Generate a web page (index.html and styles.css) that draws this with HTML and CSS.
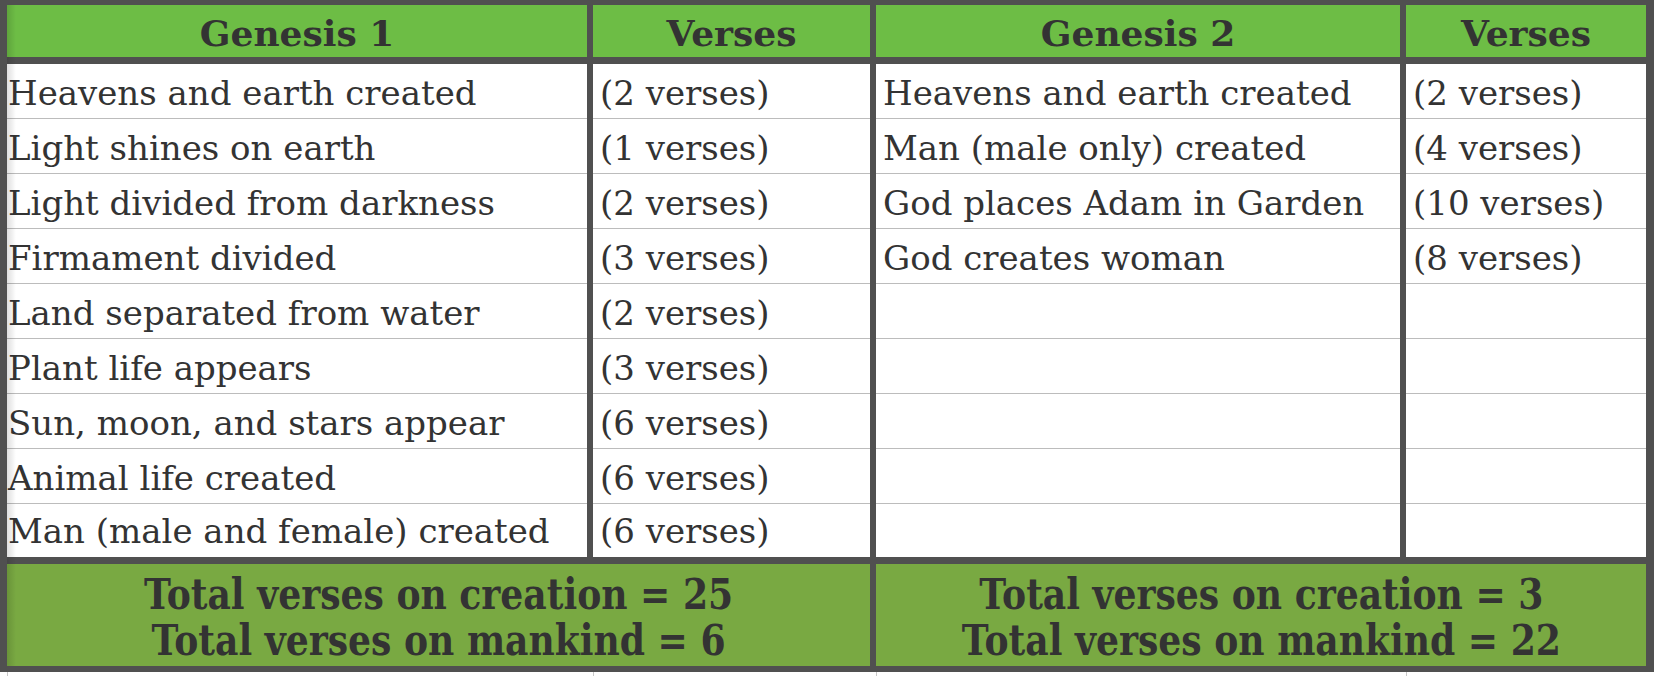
FILE: index.html
```html
<!DOCTYPE html>
<html>
<head>
<meta charset="utf-8">
<link rel="stylesheet" href="styles.css">
</head>
<body>
<div class="sheet">
  <div class="head grid4">
    <div class="hcell">Genesis 1</div>
    <div class="hcell">Verses</div>
    <div class="hcell">Genesis 2</div>
    <div class="hcell">Verses</div>
  </div>
  <div class="body grid4">
    <div class="cell first">Heavens and earth created</div><div class="cell">(2 verses)</div><div class="cell">Heavens and earth created</div><div class="cell">(2 verses)</div>
    <div class="cell first">Light shines on earth</div><div class="cell">(1 verses)</div><div class="cell">Man (male only) created</div><div class="cell">(4 verses)</div>
    <div class="cell first">Light divided from darkness</div><div class="cell">(2 verses)</div><div class="cell">God places Adam in Garden</div><div class="cell">(10 verses)</div>
    <div class="cell first">Firmament divided</div><div class="cell">(3 verses)</div><div class="cell">God creates woman</div><div class="cell">(8 verses)</div>
    <div class="cell first">Land separated from water</div><div class="cell">(2 verses)</div><div class="cell"></div><div class="cell"></div>
    <div class="cell first">Plant life appears</div><div class="cell">(3 verses)</div><div class="cell"></div><div class="cell"></div>
    <div class="cell first">Sun, moon, and stars appear</div><div class="cell">(6 verses)</div><div class="cell"></div><div class="cell"></div>
    <div class="cell first">Animal life created</div><div class="cell">(6 verses)</div><div class="cell"></div><div class="cell"></div>
    <div class="cell first last">Man (male and female) created</div><div class="cell last">(6 verses)</div><div class="cell last"></div><div class="cell last"></div>
  </div>
  <div class="foot">
    <div class="fcell"><span class="ftext">Total verses on creation = 25<br>Total verses on mankind = 6</span></div>
    <div class="fcell"><span class="ftext">Total verses on creation = 3<br>Total verses on mankind = 22</span></div>
  </div>
</div>
<div class="below">
  <div class="bl"></div><div class="bl"></div><div class="bl"></div><div class="bl"></div>
</div>
</body>
</html>
```
FILE: styles.css
```css
html, body {
  margin: 0;
  padding: 0;
  background: #ffffff;
}
body {
  width: 1654px;
  height: 676px;
  overflow: hidden;
  font-family: "DejaVu Serif", Georgia, serif;
  color: #333333;
}
.sheet {
  position: relative;
  background: #505050;
  padding: 5px 8px 6px 7px;
  display: flex;
  flex-direction: column;
  gap: 7px;
}
.sheet::after {
  content: "";
  position: absolute;
  left: 7px;
  top: 5px;
  bottom: 6px;
  width: 9px;
  background: linear-gradient(to right, rgba(0,0,0,0.13), rgba(0,0,0,0));
  pointer-events: none;
}
.grid4 {
  display: grid;
  grid-template-columns: 580px 277px 524px 240px;
  column-gap: 6px;
}
.head {
  height: 52px;
}
.hcell {
  background: #6dbd45;
  display: flex;
  align-items: center;
  justify-content: center;
  font-weight: bold;
  font-size: 36px;
  padding-top: 3px;
}
.body {
  grid-template-rows: repeat(8, 55px) 53px;
}
.cell {
  background: #ffffff;
  border-bottom: 1px solid #bcbcbc;
  font-size: 34px;
  line-height: 54px;
  padding-top: 2px;
  box-sizing: border-box;
  padding-left: 7px;
  white-space: nowrap;
  overflow: hidden;
}
.cell.first {
  padding-left: 1px;
}
.cell.last {
  border-bottom: none;
  line-height: 51px;
}
.foot {
  display: grid;
  grid-template-columns: 863px 770px;
  column-gap: 6px;
  height: 102px;
}
.fcell {
  background: #79a942;
  display: flex;
  align-items: center;
  justify-content: center;
  text-align: center;
  font-weight: bold;
  font-size: 42px;
  line-height: 46px;
  padding-top: 5px;
}
.ftext {
  display: inline-block;
  transform: scaleX(0.86);
  white-space: nowrap;
}
.below {
  display: grid;
  grid-template-columns: 580px 277px 524px 240px;
  column-gap: 6px;
  padding-left: 7px;
  height: 4px;
}
.bl {
  border-left: 1px solid #c8c8c8;
}
```
